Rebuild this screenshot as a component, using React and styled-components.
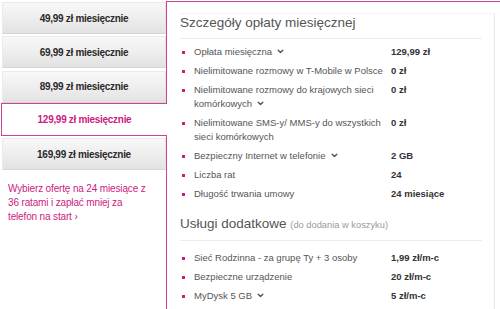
import React from "react";
import styled, { createGlobalStyle } from "styled-components";

const PINK = "#c9458f";
const MAGENTA = "#cc1c7e";

const GlobalStyle = createGlobalStyle`
  html, body {
    margin: 0;
    padding: 0;
    background: #fff;
  }
`;

const tabs = [
  "49,99 zł miesięcznie",
  "69,99 zł miesięcznie",
  "89,99 zł miesięcznie",
  "129,99 zł miesięcznie",
  "169,99 zł miesięcznie",
];

const details = [
  { label: "Opłata miesięczna", more: true, value: "129,99 zł" },
  { label: "Nielimitowane rozmowy w T-Mobile w Polsce", value: "0 zł" },
  {
    label: ["Nielimitowane rozmowy do krajowych sieci", "komórkowych"],
    more: true,
    value: "0 zł",
  },
  {
    label: ["Nielimitowane SMS-y/ MMS-y do wszystkich", "sieci komórkowych"],
    value: "0 zł",
  },
  { label: "Bezpieczny Internet w telefonie", more: true, value: "2 GB" },
  { label: "Liczba rat", value: "24" },
  { label: "Długość trwania umowy", value: "24 miesiące" },
];

const extras = [
  { label: "Sieć Rodzinna - za grupę Ty + 3 osoby", value: "1,99 zł/m-c" },
  { label: "Bezpieczne urządzenie", value: "20 zł/m-c" },
  { label: "MyDysk 5 GB", more: true, value: "5 zł/m-c" },
];

const Chevron = () => (
  <ChevronStyled width="7" height="5" viewBox="0 0 7 5">
    <polyline
      points="1.2,1.2 3.5,3.5 5.8,1.2"
      fill="none"
      stroke="#555"
      strokeWidth="1.4"
      strokeLinecap="round"
      strokeLinejoin="round"
    />
  </ChevronStyled>
);

const Row = ({ label, more, value }) => {
  const lines = Array.isArray(label) ? label : [label];
  return (
    <RowStyled>
      <Bullet />
      <Label>
        {lines.map((line, i) => (
          <span key={i}>
            {line}
            {more && i === lines.length - 1 && <Chevron />}
            {i < lines.length - 1 && <br />}
          </span>
        ))}
      </Label>
      <Value>{value}</Value>
    </RowStyled>
  );
};

const App = () => (
  <>
    <GlobalStyle />
    <Page>
      <Sidebar>
        <TabList>
          {tabs.map((t, i) => (
            <Tab key={t} $active={i === 3}>
              {t}
            </Tab>
          ))}
        </TabList>
        <Promo>
          Wybierz ofertę na 24 miesiące z 36 ratami i zapłać mniej za telefon
          na start ›
        </Promo>
      </Sidebar>

      <Panel>
        <Card>
          <Heading>Szczegóły opłaty miesięcznej</Heading>
          <List $top={6}>
            {details.map((d, i) => (
              <Row key={i} {...d} />
            ))}
          </List>

          <Heading $spaced>
            Usługi dodatkowe <small>(do dodania w koszyku)</small>
          </Heading>
          <List $top={10}>
            {extras.map((d, i) => (
              <Row key={i} {...d} />
            ))}
          </List>
        </Card>
      </Panel>
    </Page>
  </>
);

export default App;

const Page = styled.div`
  display: flex;
  width: 500px;
  height: 309px;
  overflow: hidden;
  background: #fff;
  font-family: "Liberation Sans", Arial, sans-serif;
`;

const Sidebar = styled.div`
  width: 166px;
  flex-shrink: 0;
  padding-top: 2px;
  box-sizing: border-box;
`;

const TabList = styled.div`
  display: flex;
  flex-direction: column;
  gap: 2.3px;
`;

const Tab = styled.div`
  position: relative;
  box-sizing: border-box;
  display: flex;
  align-items: center;
  justify-content: center;
  height: ${(p) => (p.$active ? "33px" : "32px")};
  margin: ${(p) => (p.$active ? "-2px -1px 0 1px" : "0 0 0 2px")};
  font-size: 10px;
  font-weight: bold;
  letter-spacing: -0.3px;
  color: ${(p) => (p.$active ? MAGENTA : "#2a2a2a")};
  background: ${(p) =>
    p.$active ? "#fff" : "linear-gradient(#f8f8f8, #ececec 60%, #e2e2e2)"};
  border: 1px solid ${(p) => (p.$active ? PINK : "#ebebeb")};
  border-bottom-color: ${(p) => (p.$active ? PINK : "#d6d6d6")};
  border-right: ${(p) => (p.$active ? "none" : "1px solid #e3e3e3")};
  z-index: ${(p) => (p.$active ? 2 : 0)};
`;

const Promo = styled.div`
  margin: 12px 14px 0 8px;
  font-size: 10px;
  line-height: 14px;
  letter-spacing: -0.15px;
  color: ${MAGENTA};
`;

const Panel = styled.div`
  flex: 1;
  margin-top: 1px;
  padding: 11px 5px 0 13px;
  border-top: 1px solid ${PINK};
  border-left: 1px solid ${PINK};
  box-sizing: border-box;
`;

const Card = styled.div`
  height: 100%;
  box-sizing: border-box;
  padding-right: 12px;
  border-top: 1px solid #f4f4f4;
  border-right: 1px solid #e7e7e7;
`;

const Heading = styled.h2`
  margin: ${(p) => (p.$spaced ? "14px" : "0")} 0 0;
  padding-bottom: 6px;
  border-bottom: 1px solid #ececec;
  font-size: 13.5px;
  line-height: 18px;
  font-weight: normal;
  color: #555;

  small {
    font-size: 9.3px;
    color: #9a9a9a;
  }
`;

const List = styled.div`
  display: flex;
  flex-direction: column;
  gap: 5px;
  margin-top: ${(p) => p.$top}px;
`;

const RowStyled = styled.div`
  display: grid;
  grid-template-columns: 14px 197px auto;
  align-items: start;
  font-size: 9.5px;
  line-height: 14px;
  color: #555;
`;

const Bullet = styled.span`
  width: 3px;
  height: 3px;
  margin: 5.5px 0 0 2px;
  background: ${MAGENTA};
`;

const Label = styled.div`
  white-space: nowrap;
`;

const Value = styled.div`
  font-weight: bold;
  color: #333;
`;

const ChevronStyled = styled.svg`
  display: inline-block;
  margin-left: 5px;
  vertical-align: 1px;
`;
